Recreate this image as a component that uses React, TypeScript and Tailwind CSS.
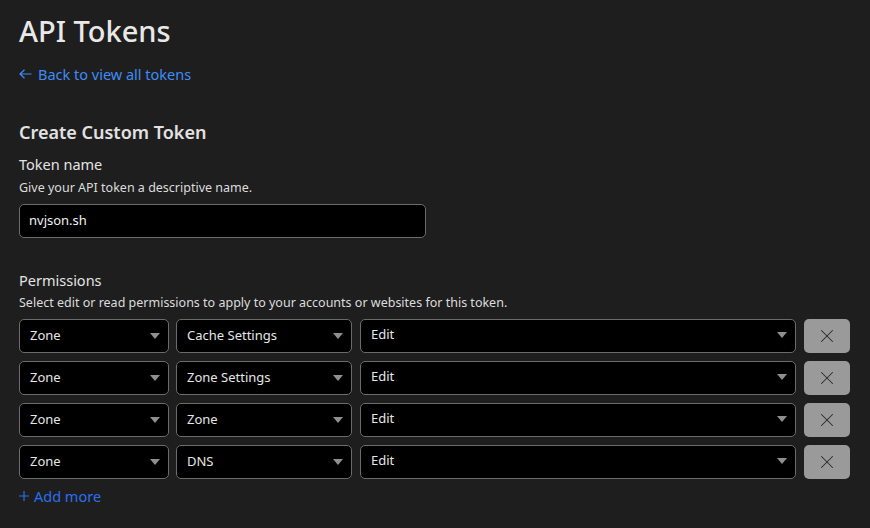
import { X } from "lucide-react";

const rows = [
  { resource: "Zone", scope: "Cache Settings", access: "Edit" },
  { resource: "Zone", scope: "Zone Settings", access: "Edit" },
  { resource: "Zone", scope: "Zone", access: "Edit" },
  { resource: "Zone", scope: "DNS", access: "Edit" },
];

function Caret() {
  return (
    <svg width="10" height="6" viewBox="0 0 10 6" className="shrink-0">
      <path d="M0 0h10L5 6z" fill="#8f8f8f" />
    </svg>
  );
}

function Select({ value, className }: { value: string; className: string }) {
  return (
    <div
      className={`flex items-center justify-between h-[34px] pl-[10px] pr-[8px] bg-black border border-[#6b6b6b] rounded-[5px] text-[13px] text-[#e6e6e6] ${className}`}
    >
      <span>{value}</span>
      <Caret />
    </div>
  );
}

export default function App() {
  return (
    <div
      className="min-h-[528px] bg-[#1e1e1e] text-[#e4e4e4] px-[19px] pt-[12px]"
      style={{ fontFamily: '"Noto Sans", "Open Sans", sans-serif' }}
    >
      <h1 className="text-[29px] leading-[38px] font-medium text-[#e8e8e8]">API Tokens</h1>
      <a className="mt-[14px] flex items-center gap-[6px] text-[14.5px] leading-[20px] text-[#3f8cf6]">
        <svg width="13" height="10" viewBox="0 0 13 10" fill="none" stroke="#3f8cf6" strokeWidth="1.2">
          <path d="M12.5 5H1M5.5 0.8L1 5l4.5 4.2" />
        </svg>
        Back to view all tokens
      </a>

      <h2 className="mt-[36px] text-[18px] leading-[24px] font-semibold text-[#e2e2e2]">Create Custom Token</h2>
      <div className="mt-[10px] text-[14.5px] leading-[20px]">Token name</div>
      <div className="mt-[5px] text-[12.5px] leading-[18px] text-[#dcdcdc]">Give your API token a descriptive name.</div>
      <div className="mt-[7px] w-[407px] h-[34px] flex items-center px-[9px] bg-black border border-[#6b6b6b] rounded-[5px] text-[13px] text-[#f0f0f0]">
        nvjson.sh
      </div>

      <div className="mt-[32px] text-[14.5px] leading-[20px]">Permissions</div>
      <div className="mt-[4px] text-[12.5px] leading-[18px] text-[#dcdcdc]">
        Select edit or read permissions to apply to your accounts or websites for this token.
      </div>
      <div className="mt-[7px] flex flex-col gap-[8px]">
        {rows.map((r, i) => (
          <div key={i} className="flex items-center">
            <Select value={r.resource} className="w-[150px]" />
            <Select value={r.scope} className="w-[176px] ml-[7px]" />
            <Select value={r.access} className="w-[436px] ml-[8px] !pb-[2px]" />
            <button className="ml-[8px] w-[46px] h-[34px] flex items-center justify-center bg-[#9a9a9a] rounded-[5px]">
              <X size={22} strokeWidth={1.1} color="#2a2a2a" />
            </button>
          </div>
        ))}
      </div>
      <a className="mt-[7px] flex items-center gap-[5px] text-[14.5px] leading-[20px] text-[#2a6ff0]">
        <svg width="10" height="10" viewBox="0 0 10 10" fill="none" stroke="#2a6ff0" strokeWidth="1.2">
          <path d="M5 0v10M0 5h10" />
        </svg>
        Add more
      </a>
    </div>
  );
}
